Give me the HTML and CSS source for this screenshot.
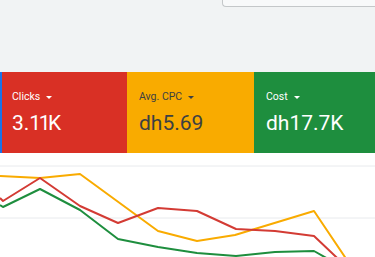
FILE: index.html
```html
<!DOCTYPE html>
<html lang="en">
<head>
  <meta charset="UTF-8">
  <title>Overview</title>
  <link rel="stylesheet" href="styles.css">
</head>
<body>
  <div class="top">
    <div class="search-box"></div>
  </div>

  <div class="cards">
    <div class="card red first">
      <div class="label">Clicks <span class="arrow"></span></div>
      <div class="value">3.<span class="ones">11</span>K</div>
    </div>
    <div class="card yellow">
      <div class="label">Avg. CPC <span class="arrow"></span></div>
      <div class="value">dh5.69</div>
    </div>
    <div class="card green">
      <div class="label">Cost <span class="arrow"></span></div>
      <div class="value">dh17.7K</div>
    </div>
  </div>

  <div class="chart">
    <svg width="375" height="104" viewBox="0 0 375 104">
      <line x1="0" y1="13" x2="375" y2="13" class="grid"/>
      <line x1="0" y1="65" x2="375" y2="65" class="grid"/>
      <polyline class="ln-yellow" points="0,23 40,25 80,21 158,78 197,88 235,82 314,58 353,116"/>
      <polyline class="ln-red" points="0,45 3,48 40,25 80,53 118,70 158,55 197,58 236,76 275,78 314,83 353,120"/>
      <polyline class="ln-green" points="0,52 3,54 40,36 80,57 118,86 158,94 197,100 236,103 275,99 314,98 353,120"/>
    </svg>
  </div>
</body>
</html>
```

FILE: styles.css
```css
body {
  margin: 0;
  padding: 0;
  background: #f1f3f4;
  font-family: Roboto, "Liberation Sans", sans-serif;
  width: 375px;
  height: 257px;
  overflow: hidden;
}
.top {
  height: 72px;
  display: flex;
  justify-content: flex-end;
  align-items: flex-start;
}
.search-box {
  width: 152px;
  height: 6px;
  background: #f8f9fa;
  border: 1px solid #c4c7c9;
  border-top: none;
  border-right: none;
  border-bottom-left-radius: 4px;
}
.cards {
  display: grid;
  grid-template-columns: 127px 127px 1fr;
  height: 81px;
}
.card {
  padding: 19px 12px 0;
}
.card.first {
  box-shadow: inset 2px 0 #1a73e8;
}
.red {
  background: #d93025;
  color: #fff;
}
.yellow {
  background: #f9ab00;
  color: #3c4043;
}
.green {
  background: #1e8e3e;
  color: #fff;
}
.label {
  font-size: 10.5px;
  line-height: 12px;
  display: flex;
  align-items: center;
  gap: 6px;
}
.arrow {
  width: 0;
  height: 0;
  border-left: 3.5px solid transparent;
  border-right: 3.5px solid transparent;
  border-top: 3.5px solid currentColor;
}
.value {
  margin-top: 8px;
  font-size: 21px;
  line-height: 25px;
}
/* narrow "1" like the original face */
.ones {
  letter-spacing: -2.5px;
}
.chart {
  background: #fff;
  height: 104px;
}
.chart svg {
  display: block;
}
.grid {
  stroke: #e8eaed;
  stroke-width: 1;
}
polyline {
  fill: none;
  stroke-width: 2;
  stroke-linejoin: round;
}
.ln-yellow { stroke: #f9ab00; }
.ln-red { stroke: #d33b34; }
.ln-green { stroke: #1e8e3e; }
```
